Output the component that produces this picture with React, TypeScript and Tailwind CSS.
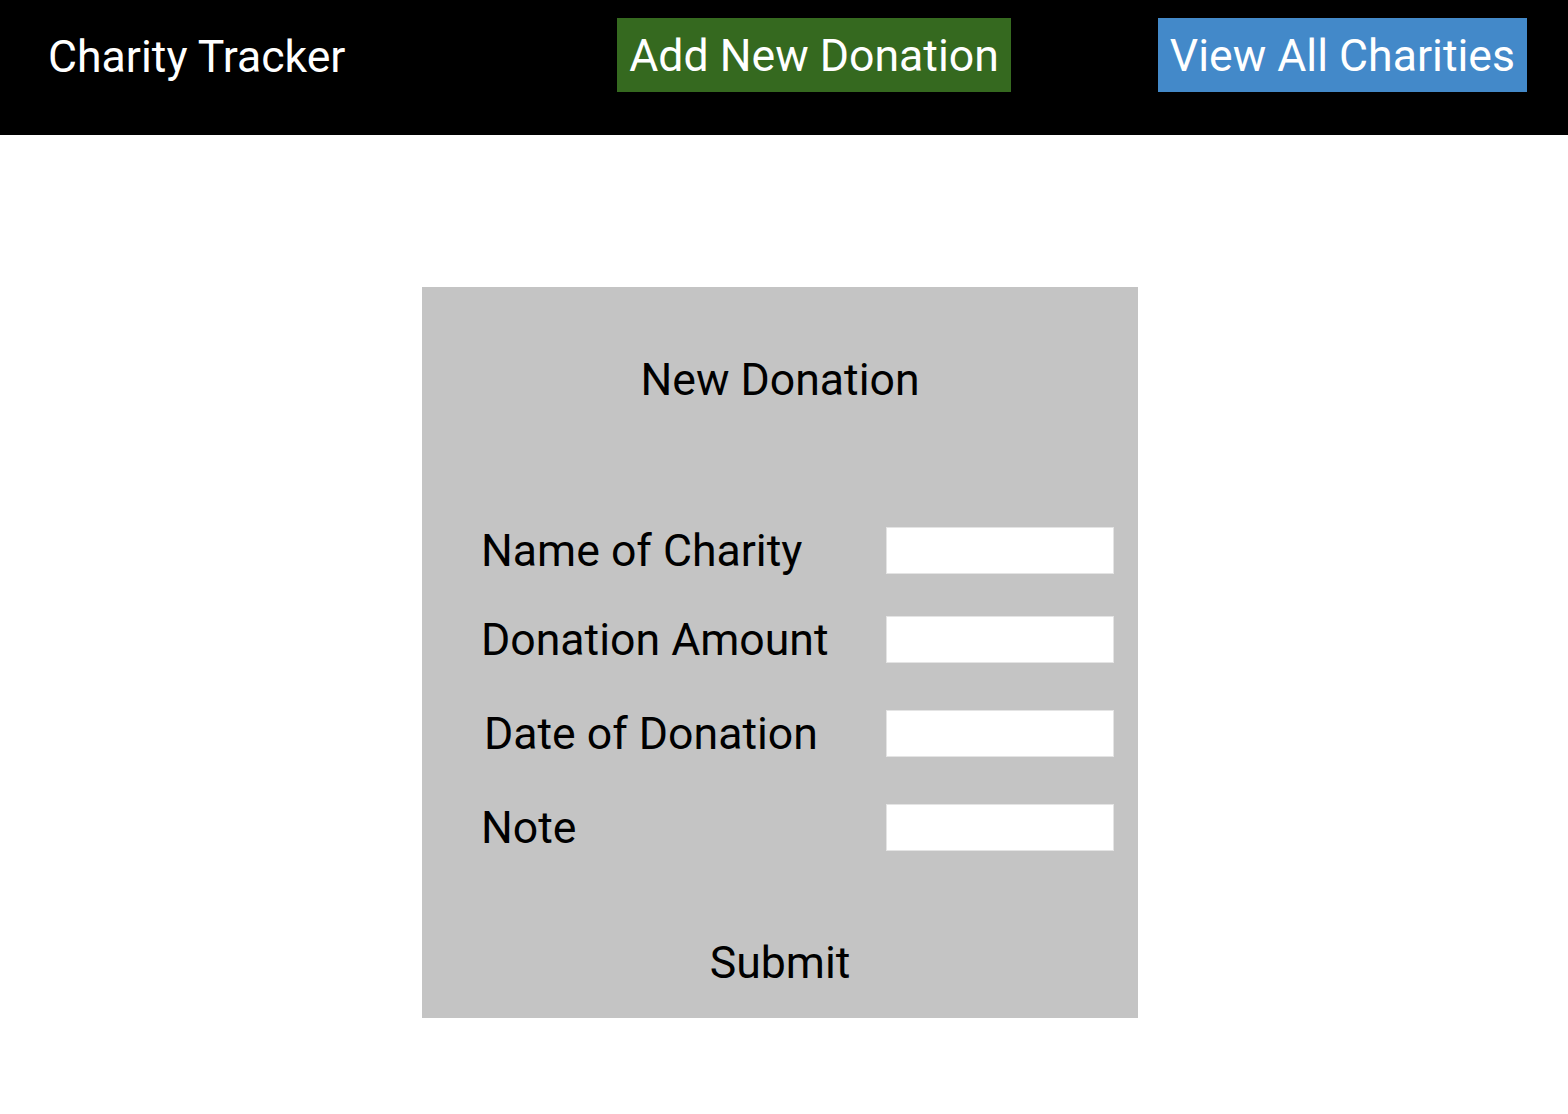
import React from 'react';

const FIELDS = [
  { label: 'Name of Charity', mt: 'mt-[121px]', shift: '' },
  { label: 'Donation Amount', mt: 'mt-[42px]', shift: '' },
  { label: 'Date of Donation', mt: 'mt-[47px]', shift: 'ml-[3px]' },
  { label: 'Note', mt: 'mt-[47px]', shift: '' },
];

export default function App() {
  return (
    <div className="min-h-[1114px] bg-white font-['Roboto',sans-serif] text-[44.6px] leading-[52px]">
      {/* Top bar */}
      <header className="h-[135px] bg-black flex items-start pl-[48px] pr-[41px]">
        <h1 className="mt-[31px] text-white font-normal">Charity Tracker</h1>
        <div className="flex-1" />
        <button className="mt-[18px] h-[74px] px-3 pt-[12px] pb-[10px] bg-[#35691f] text-white cursor-pointer">
          Add New Donation
        </button>
        <button className="ml-[147px] mt-[18px] h-[74px] px-3 pt-[12px] pb-[10px] bg-[#4389c9] text-white cursor-pointer">
          View All Charities
        </button>
      </header>

      {/* Form card */}
      <main className="pt-[152px] pl-[422px]">
        <form className="w-[716px] h-[731px] bg-[#c4c4c4] flex flex-col pt-[67px] pl-[59px] pr-[24px] text-black">
          <h2 className="text-center pr-[35px] font-normal">New Donation</h2>

          {FIELDS.map(f => (
            <div key={f.label} className={`${f.mt} h-[47px] flex items-center justify-between`}>
              <label className={f.shift}>{f.label}</label>
              <input type="text" className="w-[228px] h-[47px] bg-white border border-[#e4e4e4] outline-none" />
            </div>
          ))}

          <button type="button" className="mt-[86px] text-center pr-[35px] cursor-pointer">
            Submit
          </button>
        </form>
      </main>
    </div>
  );
}
